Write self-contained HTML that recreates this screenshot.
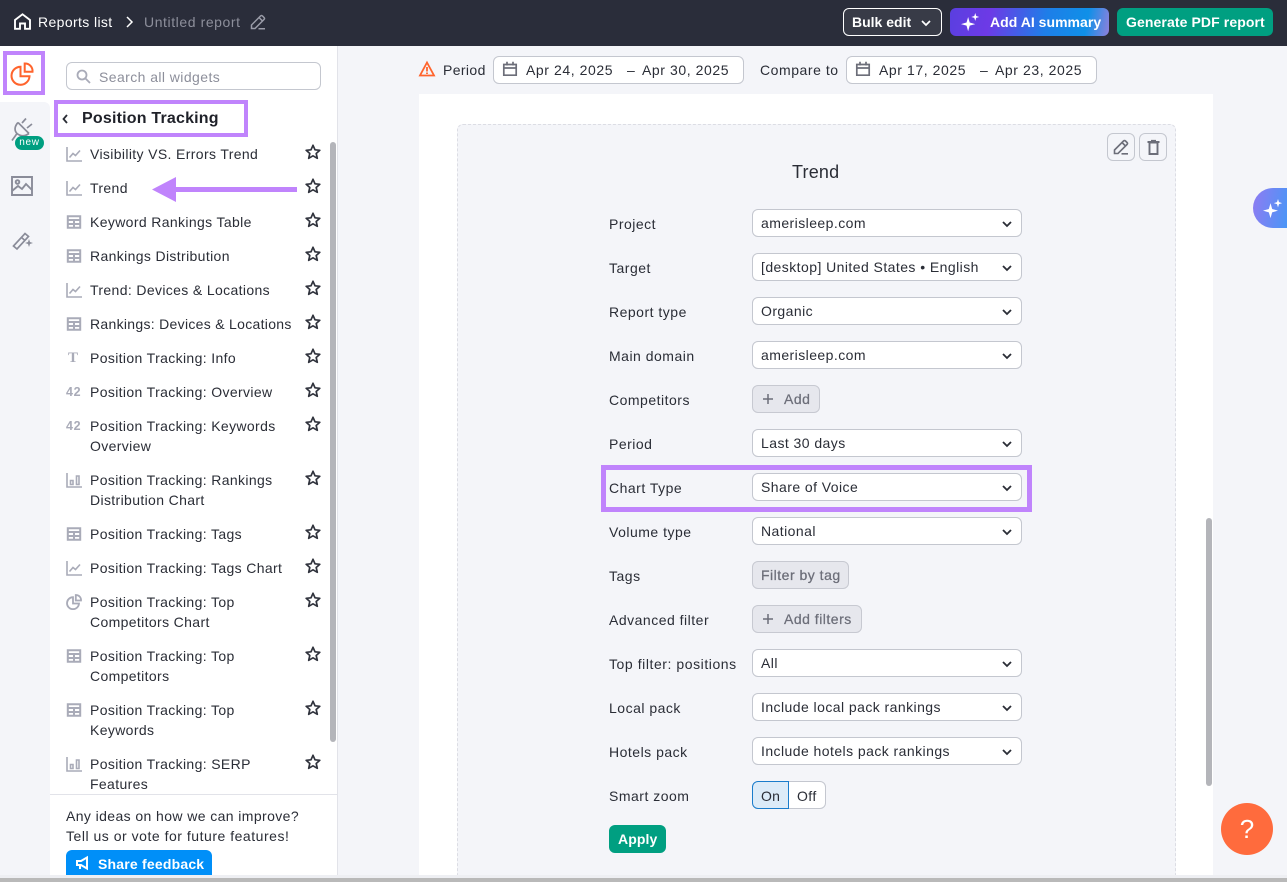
<!DOCTYPE html>
<html lang="en"><head><meta charset="utf-8"><title>Report</title>
<style>
*{box-sizing:border-box}
html,body{margin:0;padding:0;width:1287px;height:882px;overflow:hidden;background:#f4f5f9;font-family:"Liberation Sans",sans-serif;color:#2a2d36;font-size:14px;letter-spacing:.36px}
.a{position:absolute}
.t{position:absolute;white-space:nowrap;line-height:20px}
.l{letter-spacing:.5px}
svg{position:absolute;overflow:visible;display:block}
.ic{width:16px;height:16px;left:66px;fill:none;stroke:#a9abb8;stroke-width:1.6}
.st{width:16px;height:16px;left:305px;fill:none;stroke:#2f323c;stroke-width:1.7;stroke-linejoin:round}
.sel{position:absolute;left:752px;width:270px;height:28px;background:#fff;border:1px solid #c4c7cf;border-radius:6px;letter-spacing:.44px}
.sel span{position:absolute;left:8px;top:3px;line-height:20px;white-space:nowrap}
.sel svg{left:248px;top:8px;width:12px;height:12px;fill:none;stroke:#2a2d36;stroke-width:1.8}
.g{position:absolute;left:752px;height:28px;background:#e6e7ed;border:1px solid #c7c9d1;border-radius:6px;color:#6c6e79;letter-spacing:.5px;-webkit-text-stroke:.25px #6c6e79}
.g span{position:absolute;top:3px;line-height:20px;white-space:nowrap}
.g svg{left:9px;top:7px;width:12px;height:12px;stroke:#6c6e79;stroke-width:1.5;fill:none}
.hl{position:absolute;border:4px solid #c084fc}
</style></head><body>
<svg width="0" height="0" style="position:absolute"><defs>
<symbol id="line" viewBox="0 0 16 16"><path d="M1 1V15H16M3.500 11.500L7 7.500L9.500 9.500L14 4.500"/></symbol>
<symbol id="table" viewBox="0 0 16 16"><path d="M1.800 2.200H14.200V13.800H1.800ZM1.800 6H14.200M1.800 10H14.200M8 6V13.800" stroke-width="2"/></symbol>
<symbol id="bar" viewBox="0 0 16 16"><path d="M1 1V15H16M4.500 8.500H7V12.500H4.500ZM10.500 4H13V12.500H10.500Z"/></symbol>
<symbol id="pie" viewBox="0 0 16 16"><path d="M7 3.200A6 6 0 1 0 13 9.500H7ZM9.800 1A5 5 0 0 1 15 6.500H9.800Z"/></symbol>
<symbol id="star" viewBox="0 0 16 16"><path d="M8 1.300L10 5.800L14.800 6.300L11.200 9.500L12.300 14.300L8 11.800L3.700 14.300L4.800 9.500L1.200 6.300L6 5.800Z"/></symbol>
<symbol id="chev" viewBox="0 0 12 12"><path d="M2 4L6 8L10 4"/></symbol>
<symbol id="cal" viewBox="0 0 16 16"><path d="M1.800 3.500H14.200V14.200H1.800ZM1.800 7H14.200M5 .8V4.500M11 .8V4.500" fill="none" stroke="#6c6e79" stroke-width="1.700"/></symbol>
<symbol id="pen" viewBox="0 0 16 16"><path d="M1.500 14.500V11L10.500 2Q11.500 1 12.500 2L14 3.500Q15 4.500 14 5.500L5 14.500ZM9 3.500L12.500 7M8.500 14.800H15"/></symbol>
<symbol id="spark" viewBox="0 0 24 24"><path d="M9 5L11 12L18 14L11 16L9 23L7 16L0 14L7 12ZM18 0L19.200 3.800L23 5L19.200 6.200L18 10L16.800 6.200L13 5L16.800 3.800Z" fill="#fff"/></symbol>
</defs></svg>

<div class="a" style="left:0;top:0;width:1287px;height:46px;background:#2a2d3a"></div>
<svg style="left:14px;top:13px" width="17" height="17" viewBox="0 0 17 17" fill="none" stroke="#fff" stroke-width="1.900"><path d="M1 7L8.500 1.300L16 7V15.800H11V10.500H6V15.800H1Z"/></svg>
<div class="t" style="left:38px;top:12px;color:#fff;letter-spacing:.38px;font-size:14px">Reports list</div>
<svg style="left:125px;top:16px" width="9" height="12" viewBox="0 0 9 12" fill="none" stroke="#fff" stroke-width="1.500"><path d="M2 1L7 6L2 11"/></svg>
<div class="t" style="left:144px;top:12px;color:#8d8f9b;letter-spacing:.58px">Untitled report</div>
<svg style="left:250px;top:14px;fill:none;stroke:#9a9ca8;stroke-width:1.500" width="16" height="16"><use href="#pen"/></svg>

<div class="a" style="left:843px;top:8px;width:99px;height:28px;background:#383b47;border:1px solid #fff;border-radius:6px"></div>
<div class="t" style="left:852px;top:12px;color:#fff;font-weight:bold;letter-spacing:0">Bulk edit</div>
<svg style="left:920px;top:17px;stroke:#fff;fill:none;stroke-width:1.700" width="12" height="12"><use href="#chev"/></svg>
<div class="a" style="left:950px;top:8px;width:159px;height:28px;border-radius:6px;background:linear-gradient(100deg,#5a3fe0 0%,#6d3ae6 25%,#1e7ee8 60%,#0f90e8 85%,#8f80dc 100%)"></div>
<svg style="left:961px;top:13px" width="19" height="19"><use href="#spark"/></svg>
<div class="t" style="left:990px;top:12px;color:#fff;font-weight:bold;letter-spacing:.03px">Add AI summary</div>
<div class="a" style="left:1117px;top:8px;width:156px;height:28px;border-radius:6px;background:#009f81"></div>
<div class="t" style="left:1126px;top:12px;color:#fff;font-weight:bold;letter-spacing:.1px">Generate PDF report</div>

<!-- left rail -->
<div class="a" style="left:0;top:46px;width:50px;height:830px;background:#fff"></div>
<div class="a" style="left:0;top:102px;width:50px;height:774px;background:#f4f5f9;border-top-right-radius:6px"></div>
<svg style="left:10px;top:62px;stroke:#ff642d;fill:none;stroke-width:1.350" width="24" height="24"><use href="#pie"/></svg>
<div class="hl" style="left:3px;top:51px;width:42px;height:44px"></div>
<svg style="left:11px;top:118px" width="24" height="26" viewBox="0 0 24 26" fill="none" stroke="#8a8c99" stroke-width="1.700"><path d="M7 4.500L18 15.500M7 4.500C3 9 3.500 13 6 15.500C9 18 13 19 18 15.500M11 5L15 .5M16 10L21 6M6 15.500L1 22.500"/></svg>
<div class="a" style="left:15px;top:136px;width:29px;height:14px;background:#009f81;border-radius:7px;color:#fff;font-size:10px;line-height:14px;text-align:center;letter-spacing:.7px">new</div>
<svg style="left:11px;top:176px" width="22" height="20" viewBox="0 0 22 20" fill="none" stroke="#8a8c99" stroke-width="1.900"><path d="M1 1H21V19H1ZM1 15L7 10L11 13L15 8L21 14"/><circle cx="6.500" cy="6" r="1.800"/></svg>
<svg style="left:12px;top:231px" width="22" height="20" viewBox="0 0 22 20" fill="none" stroke="#8a8c99" stroke-width="1.700"><path d="M1.500 15L13 2.500L16.500 5.500L5 18ZM9.500 6.500L13 9.500"/><path d="M17 8L18 11L21 12L18 13L17 16L16 13L13 12L16 11Z" fill="#8a8c99" stroke="none"/></svg>

<!-- sidebar -->
<div class="a" style="left:50px;top:46px;width:288px;height:830px;background:#fff;border-right:1px solid #e2e3e9"></div>
<div class="a" style="left:66px;top:62px;width:255px;height:28px;border:1px solid #c4c7cf;border-radius:6px"></div>
<svg style="left:76px;top:69px" width="15" height="15" viewBox="0 0 15 15" fill="none" stroke="#a9abb8" stroke-width="1.800"><circle cx="6" cy="6" r="4.500"/><path d="M9.500 9.500L14 14"/></svg>
<div class="t" style="left:99px;top:67px;color:#8d8f9b;letter-spacing:.42px">Search all widgets</div>
<div class="hl" style="left:54px;top:100px;width:194px;height:37px"></div>
<svg style="left:60px;top:113px" width="10" height="12" viewBox="0 0 10 12" fill="none" stroke="#2a2d36" stroke-width="1.800"><path d="M7 2L3.500 6L7 10"/></svg>
<div class="t" style="left:82px;top:109px;font-size:16px;font-weight:bold;letter-spacing:.2px;color:#1f2129">Position Tracking</div>

<svg class="ic" style="top:146px"><use href="#line"/></svg><div class="t" style="left:90px;top:144px">Visibility VS. Errors Trend</div><svg class="st" style="top:144px"><use href="#star"/></svg>
<svg class="ic" style="top:180px"><use href="#line"/></svg><div class="t" style="left:90px;top:178px">Trend</div><svg class="st" style="top:178px"><use href="#star"/></svg>
<svg class="ic" style="top:214px"><use href="#table"/></svg><div class="t" style="left:90px;top:212px">Keyword Rankings Table</div><svg class="st" style="top:212px"><use href="#star"/></svg>
<svg class="ic" style="top:248px"><use href="#table"/></svg><div class="t" style="left:90px;top:246px">Rankings Distribution</div><svg class="st" style="top:246px"><use href="#star"/></svg>
<svg class="ic" style="top:282px"><use href="#line"/></svg><div class="t" style="left:90px;top:280px">Trend: Devices &amp; Locations</div><svg class="st" style="top:280px"><use href="#star"/></svg>
<svg class="ic" style="top:316px"><use href="#table"/></svg><div class="t" style="left:90px;top:314px;letter-spacing:.3px">Rankings: Devices &amp; Locations</div><svg class="st" style="top:314px"><use href="#star"/></svg>
<div class="t" style="left:68px;top:348px;color:#a9abb8;font-weight:bold;font-family:'Liberation Serif',serif;font-size:15px">T</div><div class="t" style="left:90px;top:348px">Position Tracking: Info</div><svg class="st" style="top:348px"><use href="#star"/></svg>
<div class="t" style="left:66px;top:382px;color:#a9abb8;font-weight:bold;font-size:12.500px;letter-spacing:.7px">42</div><div class="t" style="left:90px;top:382px">Position Tracking: Overview</div><svg class="st" style="top:382px"><use href="#star"/></svg>
<div class="t" style="left:66px;top:416px;color:#a9abb8;font-weight:bold;font-size:12.500px;letter-spacing:.7px">42</div><div class="t" style="left:90px;top:416px">Position Tracking: Keywords<br>Overview</div><svg class="st" style="top:416px"><use href="#star"/></svg>
<svg class="ic" style="top:472px"><use href="#bar"/></svg><div class="t" style="left:90px;top:470px">Position Tracking: Rankings<br>Distribution Chart</div><svg class="st" style="top:470px"><use href="#star"/></svg>
<svg class="ic" style="top:526px"><use href="#table"/></svg><div class="t" style="left:90px;top:524px">Position Tracking: Tags</div><svg class="st" style="top:524px"><use href="#star"/></svg>
<svg class="ic" style="top:560px"><use href="#line"/></svg><div class="t" style="left:90px;top:558px">Position Tracking: Tags Chart</div><svg class="st" style="top:558px"><use href="#star"/></svg>
<svg class="ic" style="top:594px;stroke-width:1.800"><use href="#pie"/></svg><div class="t" style="left:90px;top:592px">Position Tracking: Top<br>Competitors Chart</div><svg class="st" style="top:592px"><use href="#star"/></svg>
<svg class="ic" style="top:648px"><use href="#table"/></svg><div class="t" style="left:90px;top:646px">Position Tracking: Top<br>Competitors</div><svg class="st" style="top:646px"><use href="#star"/></svg>
<svg class="ic" style="top:702px"><use href="#table"/></svg><div class="t" style="left:90px;top:700px">Position Tracking: Top<br>Keywords</div><svg class="st" style="top:700px"><use href="#star"/></svg>
<svg class="ic" style="top:756px"><use href="#bar"/></svg><div class="t" style="left:90px;top:754px">Position Tracking: SERP<br>Features</div><svg class="st" style="top:754px"><use href="#star"/></svg>

<svg style="left:152px;top:177px" width="146" height="25"><path d="M0 12.500L24 0V10H145V15H24V25Z" fill="#c084fc"/></svg>
<div class="a" style="left:330px;top:142px;width:6px;height:600px;background:#b4b5ba;border-radius:3px"></div>
<div class="a" style="left:50px;top:794px;width:287px;height:1px;background:#e2e3e9"></div>
<div class="t" style="left:66px;top:806px;letter-spacing:.4px">Any ideas on how we can improve?</div>
<div class="t" style="left:66px;top:826px;letter-spacing:.52px">Tell us or vote for future features!</div>
<div class="a" style="left:66px;top:850px;width:146px;height:25px;background:#008ff8;border-radius:6px 6px 0 0"></div>
<svg style="left:76px;top:856px" width="13" height="14" viewBox="0 0 13 14" fill="none" stroke="#fff" stroke-width="2"><path d="M1 5H5L11 1.500V12.500L5 9H1ZM4 9V13"/></svg>
<div class="t" style="left:98px;top:854px;color:#fff;font-weight:bold;letter-spacing:.2px">Share feedback</div>

<!-- top controls -->
<svg style="left:419px;top:61px" width="16" height="16" viewBox="0 0 16 16" fill="none" stroke="#ff642d" stroke-width="1.800"><path d="M8 1.500L15 14.500H1ZM8 6V10.500M8 11.500V13"/></svg>
<div class="t" style="left:443px;top:60px;letter-spacing:.38px">Period</div>
<div class="a" style="left:493px;top:56px;width:251px;height:28px;background:#fff;border:1px solid #c4c7cf;border-radius:6px"></div>
<svg style="left:502px;top:61px" width="16" height="16"><use href="#cal"/></svg>
<div class="t" style="left:526px;top:60px;letter-spacing:.58px">Apr 24, 2025</div><div class="t" style="left:627px;top:60px">–</div><div class="t" style="left:642px;top:60px;letter-spacing:.58px">Apr 30, 2025</div>
<div class="t" style="left:760px;top:60px;letter-spacing:.55px">Compare to</div>
<div class="a" style="left:846px;top:56px;width:251px;height:28px;background:#fff;border:1px solid #c4c7cf;border-radius:6px"></div>
<svg style="left:855px;top:61px" width="16" height="16"><use href="#cal"/></svg>
<div class="t" style="left:879px;top:60px;letter-spacing:.58px">Apr 17, 2025</div><div class="t" style="left:980px;top:60px">–</div><div class="t" style="left:995px;top:60px;letter-spacing:.58px">Apr 23, 2025</div>

<!-- panel -->
<div class="a" style="left:419px;top:94px;width:794px;height:781px;background:#fff"></div>
<div class="a" style="left:456.500px;top:124px;width:719.500px;height:751px;background:#f4f5f9;border:1px dashed #dcdde4;border-bottom:none;border-radius:6px 6px 0 0"></div>
<div class="a" style="left:1107px;top:133px;width:28px;height:28px;border:1px solid #c4c7cf;border-radius:6px"></div>
<svg style="left:1113px;top:139px;fill:none;stroke:#6c6e79;stroke-width:1.600" width="16" height="16"><use href="#pen"/></svg>
<div class="a" style="left:1139px;top:133px;width:28px;height:28px;border:1px solid #c4c7cf;border-radius:6px"></div>
<svg style="left:1147px;top:140px" width="13" height="15" viewBox="0 0 13 15" fill="none" stroke="#6c6e79" stroke-width="1.900"><path d="M2.500 2.500H10.500V14H2.500ZM.5 2H12.500M4 .8H9"/></svg>
<div class="t" style="left:792px;top:162px;font-size:18px;letter-spacing:.2px">Trend</div>

<div class="t l" style="left:609px;top:214px">Project</div>
<div class="sel" style="top:209px"><span>amerisleep.com</span><svg><use href="#chev"/></svg></div>
<div class="t l" style="left:609px;top:258px">Target</div>
<div class="sel" style="top:253px"><span>[desktop] United States • English</span><svg><use href="#chev"/></svg></div>
<div class="t l" style="left:609px;top:302px">Report type</div>
<div class="sel" style="top:297px"><span>Organic</span><svg><use href="#chev"/></svg></div>
<div class="t l" style="left:609px;top:346px">Main domain</div>
<div class="sel" style="top:341px"><span>amerisleep.com</span><svg><use href="#chev"/></svg></div>
<div class="t l" style="left:609px;top:390px">Competitors</div>
<div class="g" style="top:385px;width:68px"><svg><path d="M6 1V11M1 6H11"/></svg><span style="left:31px">Add</span></div>
<div class="t l" style="left:609px;top:434px">Period</div>
<div class="sel" style="top:429px"><span>Last 30 days</span><svg><use href="#chev"/></svg></div>
<div class="t l" style="left:609px;top:478px">Chart Type</div>
<div class="sel" style="top:473px"><span>Share of Voice</span><svg><use href="#chev"/></svg></div>
<div class="a" style="left:600.500px;top:465px;width:431px;height:47px;border:5px solid #c084fc"></div>
<div class="t l" style="left:609px;top:522px">Volume type</div>
<div class="sel" style="top:517px"><span>National</span><svg><use href="#chev"/></svg></div>
<div class="t l" style="left:609px;top:566px">Tags</div>
<div class="g" style="top:561px;width:97px"><span style="left:8px">Filter by tag</span></div>
<div class="t l" style="left:609px;top:610px">Advanced filter</div>
<div class="g" style="top:605px;width:110px"><svg><path d="M6 1V11M1 6H11"/></svg><span style="left:31px">Add filters</span></div>
<div class="t" style="left:609px;top:654px;letter-spacing:.56px">Top filter: positions</div>
<div class="sel" style="top:649px"><span>All</span><svg><use href="#chev"/></svg></div>
<div class="t l" style="left:609px;top:698px">Local pack</div>
<div class="sel" style="top:693px"><span>Include local pack rankings</span><svg><use href="#chev"/></svg></div>
<div class="t l" style="left:609px;top:742px">Hotels pack</div>
<div class="sel" style="top:737px"><span>Include hotels pack rankings</span><svg><use href="#chev"/></svg></div>
<div class="t l" style="left:609px;top:786px">Smart zoom</div>
<div class="a" style="left:788px;top:781px;width:38px;height:28px;background:#fff;border:1px solid #c4c7cf;border-radius:0 6px 6px 0"></div>
<div class="a" style="left:752px;top:781px;width:37px;height:28px;background:#dcebf8;border:1px solid #1a7ccb;border-radius:6px 0 0 6px"></div>
<div class="t" style="left:761px;top:786px;letter-spacing:.2px">On</div>
<div class="t" style="left:797px;top:786px;letter-spacing:.4px">Off</div>
<div class="a" style="left:609px;top:825px;width:57px;height:28px;background:#009f81;border-radius:6px"></div>
<div class="t" style="left:618px;top:829px;color:#fff;font-weight:bold;letter-spacing:.1px">Apply</div>

<!-- scrollbar, floats, bottom -->
<div class="a" style="left:1206px;top:518px;width:6px;height:268px;background:#b4b5ba;border-radius:3px"></div>
<div class="a" style="left:1253px;top:188px;width:34px;height:40px;border-radius:20px 0 0 20px;background:linear-gradient(100deg,#8f7bf2,#4a96f6)"></div>
<svg style="left:1263px;top:199px" width="20" height="20"><use href="#spark"/></svg>
<div class="a" style="left:1221px;top:803px;width:52px;height:52px;border-radius:50%;background:#ff6b3d;color:#fff;font-size:26px;line-height:52px;text-align:center;letter-spacing:0">?</div>
<div class="a" style="left:0;top:875px;width:1287px;height:3px;background:#eeeff3"></div>
<div class="a" style="left:0;top:878px;width:1287px;height:4px;background:#b9b9b9"></div>
</body></html>
